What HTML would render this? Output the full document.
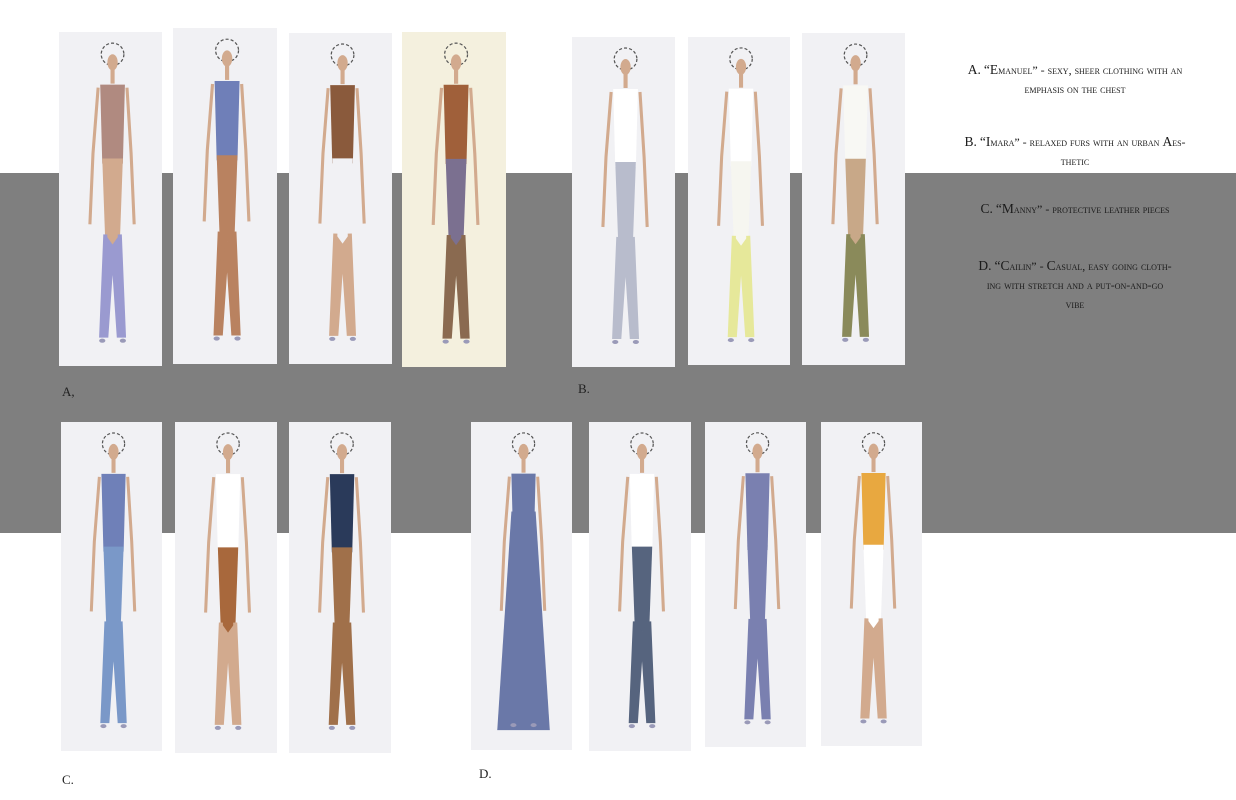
<!DOCTYPE html>
<html><head><meta charset="utf-8"><style>
html,body{margin:0;padding:0;width:1236px;height:800px;overflow:hidden;background:#fff;position:relative;font-family:"Liberation Serif",serif}
.band{position:absolute;left:0;top:173px;width:1236px;height:360px;background:#7f7f7f}
.p{position:absolute;background:#f1f1f4}
.p svg{width:100%;height:100%;display:block}
.lbl{position:absolute;font-size:13px;color:#222}
.t{position:absolute;left:925px;width:300px;text-align:center;font-size:12px;line-height:19px;color:#1a1a1a;font-variant:small-caps;white-space:nowrap}
.t b{font-weight:normal;font-size:13.5px}
</style></head><body>
<div class="band"></div>
<div id="panels"></div>
<div class="lbl" style="left:62px;top:384px">A,</div>
<div class="lbl" style="left:578px;top:381px">B.</div>
<div class="lbl" style="left:62px;top:772px">C.</div>
<div class="lbl" style="left:479px;top:766px">D.</div>
<div class="t" style="top:60px"><b>A.</b> <b>“E</b>manuel” - sexy, sheer clothing with an<br>emphasis on the chest</div>
<div class="t" style="top:132px"><b>B.</b> <b>“I</b>mara” - relaxed furs with an urban <b>A</b>es-<br>thetic</div>
<div class="t" style="top:199px"><b>C.</b> <b>“M</b>anny” - protective leather pieces</div>
<div class="t" style="top:256px"><b>D.</b> <b>“C</b>ailin” - <b>C</b>asual, easy going cloth-<br>ing with stretch and a put-on-and-go<br>vibe</div>
<script>
var S='#d2aa8e';
var P=[
[59,32,103,334,'#f1f1f4',[S,'#b08a80',S,'#9a9ad0']],
[173,28,104,336,'#f1f1f4',[S,'#6f7fb8','#b98260','#b98260']],
[289,33,103,331,'#f1f1f4',[S,'#8a5a3c','#f1f1f4',S]],
[402,32,104,335,'#f4f0de',[S,'#a0603a','#7b7090','#8a6a50']],
[572,37,103,330,'#f1f1f4',[S,'#fff','#b8bccc','#b8bccc']],
[688,37,102,328,'#f1f1f4',[S,'#fff','#f6f6f0','#e6e89a']],
[802,33,103,332,'#f1f1f4',[S,'#f8f8f4','#c8a888','#8a8a5a']],
[61,422,101,329,'#f1f1f4',[S,'#6f80b8','#7a98c8','#7a98c8']],
[175,422,102,331,'#f1f1f4',[S,'#fff','#a8683c',S]],
[289,422,102,331,'#f1f1f4',[S,'#2a3a5a','#a0704a','#a0704a']],
[471,422,101,328,'#f1f1f4',[S,'#6a78a8','#6a78a8','#6a78a8']],
[589,422,102,329,'#f1f1f4',[S,'#fff','#56647e','#56647e']],
[705,422,101,325,'#f1f1f4',[S,'#7a80b0','#7a80b0','#7a80b0']],
[821,422,101,324,'#f1f1f4',[S,'#e8a840','#fff',S]]];
var h='';
P.forEach(function(p,i){
var c=p[5];var gown=(i==10);
var s='<svg viewBox="0 0 100 330" preserveAspectRatio="none">'+
'<circle cx="52" cy="22" r="11" fill="none" stroke="#555" stroke-width="1.2" stroke-dasharray="3 2"/>'+
'<ellipse cx="52" cy="30" rx="5" ry="8" fill="'+c[0]+'"/>'+
'<rect x="50" y="37" width="4" height="14" fill="'+c[0]+'"/>'+
'<path d="M38 55 L33 120 L30 190 M66 55 L70 120 L73 190" stroke="'+c[0]+'" stroke-width="3" fill="none"/>'+
'<path d="M40 52 H64 L62 130 H42 Z" fill="'+c[1]+'"/>';
if(gown){s+='<path d="M40 90 H64 L78 310 H26 Z" fill="'+c[2]+'"/>';}
else{s+='<path d="M42 125 H62 L59 210 H45 Z" fill="'+c[2]+'"/>'+
'<path d="M45 200 L41 300 H46 L52 210 M59 200 L63 300 H58 L52 210" fill="'+c[3]+'" stroke="'+c[3]+'" stroke-width="4"/>';}
s+='<ellipse cx="42" cy="305" rx="3" ry="2" fill="#9a9ab8"/><ellipse cx="62" cy="305" rx="3" ry="2" fill="#9a9ab8"/></svg>';
h+='<div class="p" style="left:'+p[0]+'px;top:'+p[1]+'px;width:'+p[2]+'px;height:'+p[3]+'px;background:'+p[4]+'">'+s+'</div>';
});
document.getElementById('panels').innerHTML=h;
</script>
</body></html>
